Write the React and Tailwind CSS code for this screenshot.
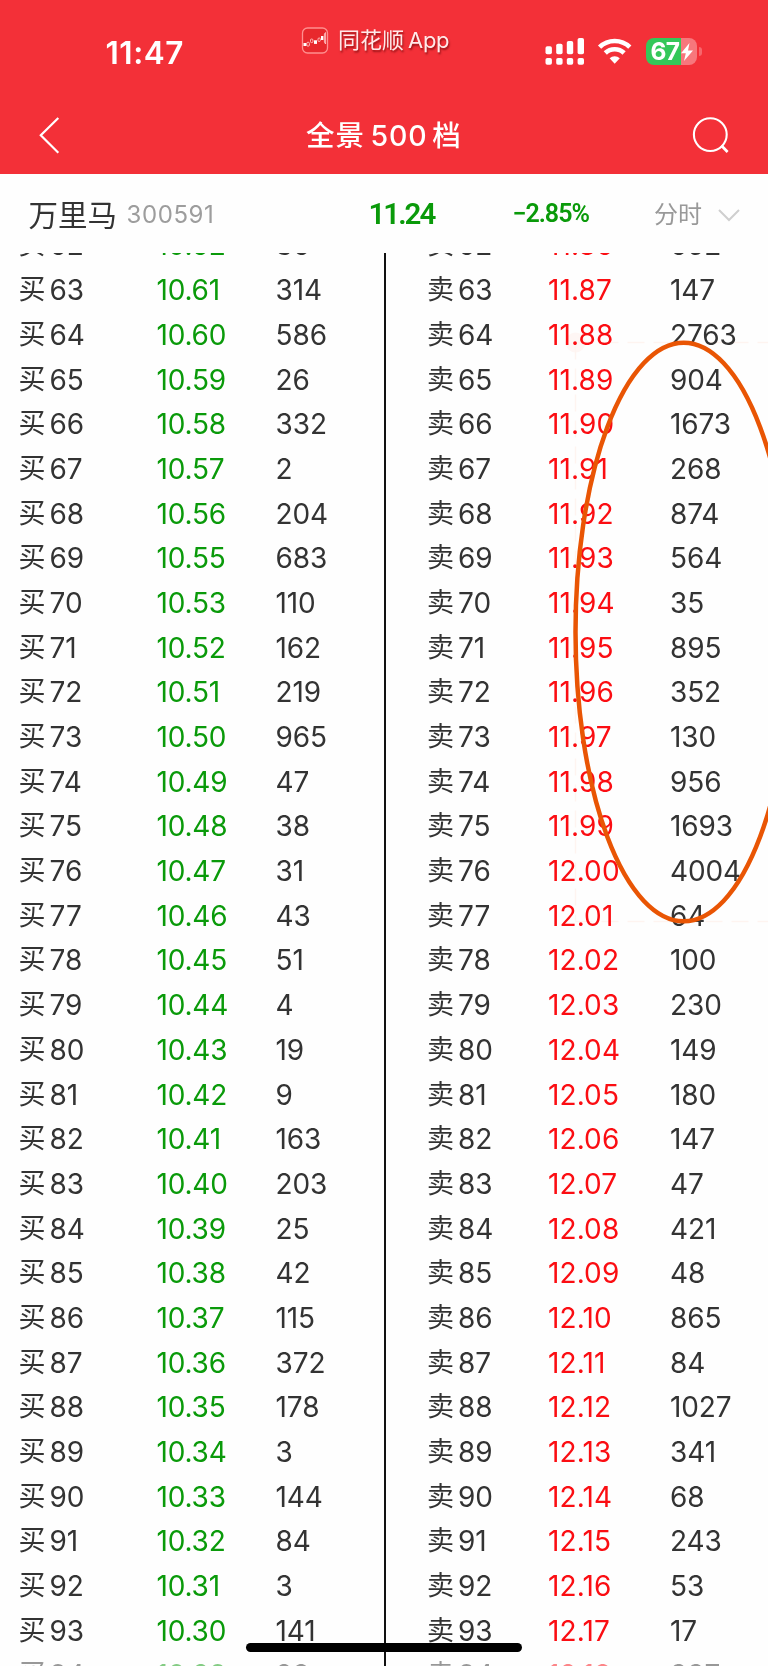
const bids = [
  [62, '10.62', '36'], [63, '10.61', '314'], [64, '10.60', '586'], [65, '10.59', '26'],
  [66, '10.58', '332'], [67, '10.57', '2'], [68, '10.56', '204'], [69, '10.55', '683'],
  [70, '10.53', '110'], [71, '10.52', '162'], [72, '10.51', '219'], [73, '10.50', '965'],
  [74, '10.49', '47'], [75, '10.48', '38'], [76, '10.47', '31'], [77, '10.46', '43'],
  [78, '10.45', '51'], [79, '10.44', '4'], [80, '10.43', '19'], [81, '10.42', '9'],
  [82, '10.41', '163'], [83, '10.40', '203'], [84, '10.39', '25'], [85, '10.38', '42'],
  [86, '10.37', '115'], [87, '10.36', '372'], [88, '10.35', '178'], [89, '10.34', '3'],
  [90, '10.33', '144'], [91, '10.32', '84'], [92, '10.31', '3'], [93, '10.30', '141'],
  [94, '10.29', '28'],
];

const asks = [
  [62, '11.86', '652'], [63, '11.87', '147'], [64, '11.88', '2763'], [65, '11.89', '904'],
  [66, '11.90', '1673'], [67, '11.91', '268'], [68, '11.92', '874'], [69, '11.93', '564'],
  [70, '11.94', '35'], [71, '11.95', '895'], [72, '11.96', '352'], [73, '11.97', '130'],
  [74, '11.98', '956'], [75, '11.99', '1693'], [76, '12.00', '4004'], [77, '12.01', '64'],
  [78, '12.02', '100'], [79, '12.03', '230'], [80, '12.04', '149'], [81, '12.05', '180'],
  [82, '12.06', '147'], [83, '12.07', '47'], [84, '12.08', '421'], [85, '12.09', '48'],
  [86, '12.10', '865'], [87, '12.11', '84'], [88, '12.12', '1027'], [89, '12.13', '341'],
  [90, '12.14', '68'], [91, '12.15', '243'], [92, '12.16', '53'], [93, '12.17', '17'],
  [94, '12.18', '337'],
];

function StatusBar() {
  return (
    <div className="flex h-[100px] items-start">
      <div className="w-[301px] pt-[33px] pl-[105.5px] text-[31.5px] leading-[39px] font-semibold tracking-[0.5px]">11:47</div>
      <div className="flex w-[244px] items-center pt-[24px]">
        <svg className="h-[28px] w-[28px]" viewBox="0 0 28 28" fill="none">
          <rect x="1.5" y="2" width="25" height="25" rx="5" fill="#e8282d" stroke="#ff8f8f" strokeWidth="1.3" />
          <rect x="2.5" y="17" width="3" height="3" fill="#fff" />
          <rect x="5.8" y="16.2" width="2.6" height="4" rx="1.2" stroke="#ffc4c4" strokeWidth="0.9" />
          <rect x="9.5" y="13" width="2.4" height="3.6" rx="1" stroke="#ffc4c4" strokeWidth="0.9" />
          <rect x="13" y="14.3" width="3" height="3.6" fill="#fff" />
          <rect x="17" y="12" width="2.3" height="3.5" rx="1" stroke="#ffc4c4" strokeWidth="0.9" />
          <rect x="20" y="10" width="2.4" height="4" fill="#fff" />
          <path d="M23.4 8v8l1.2 2V6.5z" stroke="#ffc4c4" strokeWidth="0.9" />
        </svg>
        <span className="ml-[9px] text-[22px] leading-[32px] text-[#ffe9e9] [text-shadow:1px_2px_2px_rgba(90,0,0,0.6)]">
          同花顺<span className="ml-[4px] tracking-[-0.3px]">App</span>
        </span>
      </div>
      <svg className="mt-[37px] h-[30px] w-[40px]" viewBox="0 0 40 30" fill="#fff">
        <rect x="0.5" y="9.3" width="6.4" height="8" rx="1.8" />
        <rect x="11.2" y="6.8" width="6.4" height="10.5" rx="1.8" />
        <rect x="21.8" y="4" width="6.4" height="13.3" rx="1.8" />
        <rect x="32.6" y="1" width="6.4" height="16.3" rx="1.8" />
        <rect x="0.5" y="21" width="6.4" height="6.8" rx="1.8" />
        <rect x="11.2" y="21" width="6.4" height="6.8" rx="1.8" />
        <rect x="21.8" y="21" width="6.4" height="6.8" rx="1.8" />
        <rect x="32.6" y="21" width="6.4" height="6.8" rx="1.8" />
      </svg>
      <svg className="mt-[37px] ml-[12px] h-[28px] w-[36px]" viewBox="0 0 36 28" fill="none" stroke="#fff" strokeWidth="4.6">
        <path d="M2.6 10.1a21.6 21.6 0 0 1 30.2 0" />
        <path d="M8.3 16a13.5 13.5 0 0 1 18.8 0" />
        <path d="M12.6 21.2a7.6 7.6 0 0 1 10.2 0l-5.1 5.5z" fill="#fff" stroke="none" />
      </svg>
      <div className="mt-[38px] ml-[12.5px] flex items-center">
        <div className="flex h-[27px] w-[51px] items-center rounded-[8px] bg-[linear-gradient(90deg,#34c759_0_34.5px,#f7777c_34.5px)] pl-[5px]">
          <span className="w-[29px] text-[24.5px] leading-[27px] font-bold tracking-[-0.6px]">67</span>
          <svg className="h-[18px] w-[14px]" viewBox="0 0 14 18" fill="#fff">
            <path d="M9.5 0 1 10.2h4.8L4 18l9-10.6H8z" />
          </svg>
        </div>
        <div className="ml-[2px] h-[9px] w-[3px] rounded-r-full bg-[#f7666c]" />
      </div>
    </div>
  );
}

function NavBar() {
  return (
    <div className="flex h-[74px] items-center pb-[5px]">
      <svg className="ml-[38px] h-[38px] w-[24px]" viewBox="0 0 24 38" fill="none" stroke="#fff" strokeWidth="2.2">
        <path d="M20.3 2 2.8 19.3 20.3 36.7" />
      </svg>
      <div className="ml-[244px] flex w-[386px] items-center pt-[2px] text-[28.5px] leading-[40px] font-medium">
        <span className="tracking-[1px]">全景</span>
        <span className="ml-[5.5px] tracking-[0.9px]">500</span>
        <span className="ml-[4.5px]">档</span>
      </div>
      <svg className="h-[38px] w-[38px]" viewBox="0 0 38 38" fill="none" stroke="#fff" strokeWidth="2.1">
        <circle cx="18.3" cy="18.6" r="16.4" />
        <path d="m29.3 29.6 6.3 6.3" strokeWidth="2.8" />
      </svg>
    </div>
  );
}

function StockBar() {
  return (
    <div className="flex h-[79px] items-center pt-[2px]">
      <span className="ml-[28.5px] w-[98px] text-[29.5px] leading-[40px] text-[#333]">万里马</span>
      <span className="w-[242px] text-[24px] leading-[40px] tracking-[0.6px] text-[#9d9d9d]">300591</span>
      <span className="w-[144px] pb-[2px] font-['Roboto'] text-[29.5px] leading-[40px] font-semibold tracking-[-2px] text-[#0a9a0a]">11.24</span>
      <span className="w-[141.5px] pb-[2px] font-['Roboto'] text-[25px] leading-[40px] font-semibold tracking-[-1px] text-[#0a9a0a]">−2.85%</span>
      <span className="text-[24px] leading-[40px] text-[#999]">分时</span>
      <svg className="ml-[15px] h-[14px] w-[24px]" viewBox="0 0 24 14" fill="none" stroke="#cfcfcf" strokeWidth="2">
        <path d="m2 2 10 10L22 2" />
      </svg>
    </div>
  );
}

function Book({ side, rows, colour, columns }) {
  return (
    <div className="-mt-[29.9px] flex flex-col">
      {rows.map(([level, price, volume]) => (
        <div key={level} className={`grid h-[44.69px] shrink-0 items-center text-[28px] leading-[44px] text-[#333] ${columns}`}>
          <span className="flex items-center">
            <span className="w-[31px] text-[27px]">{side}</span>
            <span>{level}</span>
          </span>
          <span className={colour}>{price}</span>
          <span className="tracking-[-0.1px]">{volume}</span>
        </div>
      ))}
    </div>
  );
}

export default function App() {
  return (
    <div className="relative flex h-[1666px] w-[768px] flex-col overflow-hidden bg-[#fefefe] font-['Inter','Noto_Sans_CJK_SC',sans-serif] whitespace-nowrap">
      <header className="h-[174px] shrink-0 bg-[#f33038] text-white">
        <StatusBar />
        <NavBar />
      </header>
      <StockBar />
      <main className="flex h-[1413px] shrink-0 overflow-hidden">
        <div className="w-[384px] pl-[18.5px]">
          <Book side="买" rows={bids} colour="text-[#0a9a0a] tracking-[-0.2px]" columns="grid-cols-[138px_119px_1fr]" />
        </div>
        <div className="w-[2px] shrink-0 bg-[#111]" />
        <div className="w-[382px] pl-[41px]">
          <Book side="卖" rows={asks} colour="text-[#fb0d12] tracking-[0.1px]" columns="grid-cols-[121px_122px_1fr]" />
        </div>
      </main>
      <div className="absolute bottom-0 left-0 h-[10px] w-[380px] bg-[#fefefe]/50" />
      <div className="absolute right-0 bottom-0 h-[10px] w-[380px] bg-[#fefefe]/50" />
      <svg className="absolute top-[320px] left-[560px] h-[620px] w-[208px] mix-blend-multiply" viewBox="560 320 208 620" fill="none">
        <circle cx="575.5" cy="342.5" r="10" fill="#ff7a50" fillOpacity="0.06" />
        <path d="M575.5 342.5H768M575.5 921.5H768M575.5 342.5V921.5" stroke="#fff5f1" strokeWidth="1.5" strokeDasharray="17 9" />
      </svg>
      <svg className="absolute top-[320px] left-[560px] h-[620px] w-[208px]" viewBox="560 320 208 620" fill="none">
        <ellipse cx="683.7" cy="632" rx="108.2" ry="289.3" stroke="#e95504" strokeWidth="4.5" />
      </svg>
      <div className="absolute top-[1643px] left-[246px] h-[9px] w-[276px] rounded-full bg-black" />
    </div>
  );
}
